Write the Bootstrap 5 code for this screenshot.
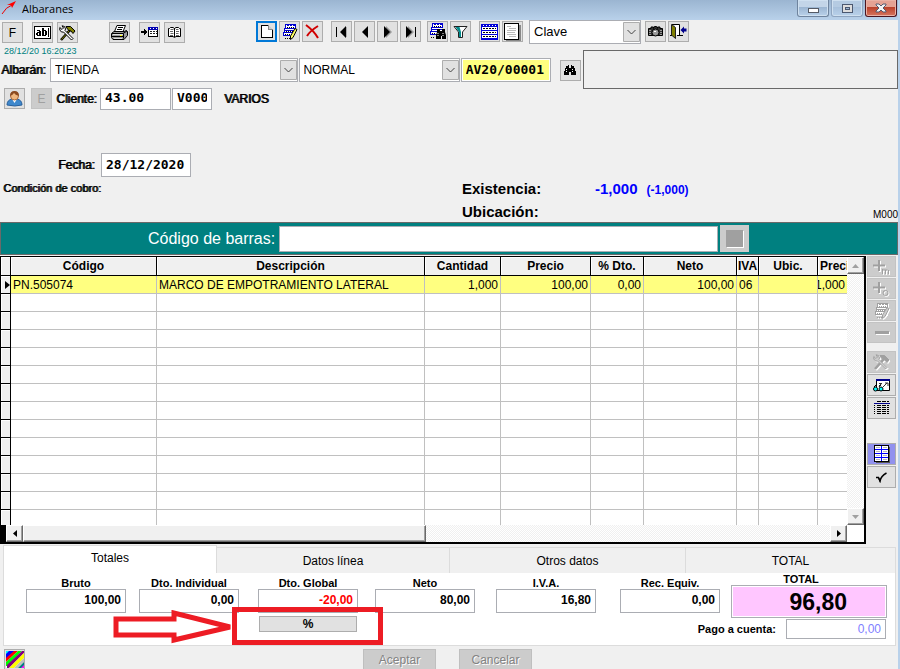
<!DOCTYPE html>
<html lang="es">
<head>
<meta charset="utf-8">
<meta name="viewport" content="width=device-width, initial-scale=1">
<title>Albaranes</title>
<link href="https://cdn.jsdelivr.net/npm/bootstrap@5.3.0/dist/css/bootstrap.min.css" rel="stylesheet">
<style>
body{font-family:"Liberation Sans",Arial,sans-serif;font-size:12px;line-height:14px;color:#000;background:#f0f0f0}
button,input,select{font-family:inherit;font-size:12px;line-height:14px;color:#000;border-radius:0}
svg{display:block;flex:none}
.frame{border-right:2px solid #b9d1ea;min-height:100vh}
.titlebar{height:20px;background:linear-gradient(#9bb5d1,#b9d1ea);font:11px/18px "Open Sans",sans-serif}
.winbtns{gap:2px;margin-right:1px}
.winbtn{width:32px;height:17px;border:1px solid #6f849e;border-top:0;border-radius:0 0 3px 3px;background:linear-gradient(#c3d5e8 45%,#9cb6d2 46%,#b9d1ea);box-shadow:inset 0 0 0 1px #cfe0f0}
.winbtn.dim{border-color:#8fa5c0;background:linear-gradient(#b5cbe2 45%,#a8c1dc 46%,#b9d1ea)}
.winbtn.exit{border-color:#4a1520;background:linear-gradient(#e5a294 45%,#bb412b 46%,#d6765f);box-shadow:inset 0 0 0 1px #eab1a5}
.tool{width:21px;height:21px;padding:0;border:1px solid #adadad;background:#e1e1e1;display:flex;align-items:center;justify-content:center;flex:none;color:#000}
.tool.current{border:2px solid #0078d7}
.tool:disabled,.side:disabled{background:#ccc;border-color:#c3c3c3;color:#a0a0a0}
.side:disabled svg{filter:drop-shadow(1px 1px 0 #fff)}
.tools{padding:1px 0 0 2px}
.tools .left-set{margin-top:1px;margin-right:71px}
.g1{gap:1px}.g2{gap:2px}.g4{gap:4px}.g9{gap:9px}.g31{gap:31px}
.ml8{margin-left:8px}.ml6{margin-left:6px}
.combo{position:relative;height:24px}
.combo select{appearance:none;width:100%;height:100%;border:1px solid #abadb3;background:#fff;padding:0 20px 0 4px}
.combo svg{position:absolute;right:1px;top:2px;pointer-events:none}
.combo.key{width:112px;margin-top:-1px}
.combo.key select{font-size:13px}
.combo.shop{flex:249 1 0}.combo.kind{flex:162 1 0}
.txt{height:24px;border:1px solid #abadb3;background:#fff;padding:0 4px;border-radius:0;min-width:0}
.mono{font:bold 13px/16px "DejaVu Sans Mono",monospace;padding-bottom:2px}
.thick{text-shadow:1px 0 0 #000}
.stamp{font-size:9px;line-height:14px;color:#008080;padding-left:4px}
.upper-left{flex:584 1 0;min-width:0}
.shop-label{width:49px;padding-left:1px}
.find{margin:0 2px 0 8px}
.notice{flex:314 1 0;height:39px;margin:6px 0 0;border:1px solid #696969}
.docno{width:90px;background:#ffff80;box-shadow:inset 0 0 0 1px #fff}
.client{margin-top:-2px;padding:0 0 0 4px;height:23px}
.client .txt{height:22px}
.client label{margin:0 2px 0 4px;width:42px}
.client .acct{width:71px;margin-right:1px}
.client .sub{width:40px}
.dates{margin-top:43px;padding-left:58px}
.dates label{width:43px}
.dates .txt{width:90px}
.cond{font-size:11px;width:462px;padding:4px 0 0 3px}
.stock{font-size:15px;line-height:23px;font-weight:bold;margin:0 0 -1px}
.stock dt{width:133px}
.stock dd{margin:0}
.stock .pair{height:23px}
.blue{color:#0000ff}
.small-blue{font-size:12px;line-height:14px;margin-left:9px}
.station{font-size:10px;line-height:14px}
.barcode{height:33px;background:#008080;border:1px solid #696969;padding-left:147px;color:#fff;font-size:16px;gap:4px}
.barcode .txt{flex:438 1 0;height:26px}
.barcode .pad{flex:147 1 0}
.scan{width:29px;height:27px;border:0;background:#ccc;display:flex;align-items:center;justify-content:center;padding:0;margin-left:-2px}
.swatch{width:17px;height:17px;background:#a0a0a0;box-shadow:1px 1px 0 #fff}
.work{padding-top:1px}
.gridbox{border:1px solid #000;border-width:1px 2px 2px 1px;background:#fff;min-width:0;flex:1 1 0}
.viewport{height:268px;overflow:hidden;flex:1 1 0;min-width:0}
.lines{table-layout:fixed;width:100%;border-collapse:separate;border-spacing:0}
.lines th,.lines td{height:18px;padding:0 2px 0 2px;border-right:1px solid #c0c0c0;border-bottom:1px solid #c0c0c0;white-space:nowrap;overflow:hidden;line-height:16px}
.lines th{height:19px;background:#f0f0f0;border-color:#000;text-align:center;box-shadow:inset 1px 1px 0 #fff}
.lines tbody th{height:18px;padding:0}
.lines tr>:last-child{border-right:0}
.lines .picked td{background:#ffff80}
.lines td.num{text-align:right}
.lines td.clipped{direction:rtl}
.vbar{width:17px;height:268px}
.hbar{height:17px}
.track{background:repeating-conic-gradient(#fff 0 25%,#f0f0f0 0 50%) 0 0/2px 2px}
.arrowbtn{width:17px;height:17px;border:1px solid;border-color:#fff #696969 #696969 #fff;box-shadow:inset -1px -1px 0 #a0a0a0;background:#f0f0f0;padding:0;display:flex;align-items:center;justify-content:center;flex:none}
.thumb{flex:404 1 0;border:1px solid;border-color:#fff #696969 #696969 #fff;box-shadow:inset -1px -1px 0 #a0a0a0;background:#f0f0f0}
.hbar .track{flex:407 1 0}
.stopper{width:5px;background:#000}
.corner{width:17px}
.sidebar{width:32px;padding:0 2px 0 1px;gap:1px}
.side{width:29px;height:22px;padding:0;border:1px solid #adadad;background:#e1e1e1;display:flex;align-items:center;justify-content:center;color:#000}
.side.low{height:21px}
.side.on{background:#9191ee}
.mt7{margin-top:7px}.mt23{margin-top:23px}
.grey-set{--b:#a0a0a0;--y:#ccc;--w:#ccc;--h:#a0a0a0}
.tabs{display:grid;grid-template-columns:214fr 233fr 236fr 210fr;margin:0 2px 0 3px;height:29px}
.tabs button{border:1px solid #dcdcdc;border-width:1px 1px 0 0;background:#f0f0f0;margin-top:3px;padding:0}
.tabs button.open{background:#fff;border-left-width:1px;margin-top:1px;padding-bottom:4px}
.pane{margin:0 2px 0 3px;background:#fff;border:1px solid #dcdcdc;border-top:0;height:73px;padding:0 8px 0 22px;display:grid;grid-template-columns:113fr 119fr 117fr 121fr 124fr 111fr 156fr;font-weight:bold}
.sum{width:100px;position:relative;padding-top:4px;text-align:center}
.sum label{display:block;font-size:11px;line-height:12px}
.sum .txt,.pay .txt{width:100px;text-align:right;font-weight:bold;padding-bottom:2px}
.sum .neg{color:#f00}
.pct{width:98px;height:16px;border:1px solid #adadad;background:#e1e1e1;padding:0;font-weight:bold;display:block;margin:3px auto 0;line-height:13px}
.grand{text-align:center;min-width:0}
.grand>label{display:block;font-size:11px;line-height:12px;padding-right:16px}
.grand .big{display:block;width:100%;height:33px;border:1px solid #abadb3;box-shadow:inset 0 0 0 1px #fff;background:#ffc6ff;font-size:23px;line-height:28px;font-weight:bold;text-align:right;padding:2px 39px 0 0}
.pay{gap:10px;font-size:11px;white-space:nowrap;margin-top:1px;padding-right:1px}
.pay>*{flex:none}
.pay .txt{height:20px;color:#8080ff;padding-bottom:0;font-weight:normal}
.mark-box{position:absolute;left:-26px;top:34px;width:151px;height:38px;border:5px solid #ed1c24;pointer-events:none;z-index:1}
.mark-arrow{position:absolute;left:-145px;top:37px;pointer-events:none}
.footer-row{padding:3px 0 0 4px}
.act{width:73px;height:21px;border:1px solid #bfbfbf;background:#ccc;padding:0}
.act:disabled{color:#838383;text-shadow:1px 1px 0 #fff}
.footer-row .logo{margin-right:338px}
.footer-row .act{margin-right:23px}
</style>
<script src="https://cdn.jsdelivr.net/npm/bootstrap@5.3.0/dist/js/bootstrap.bundle.min.js"></script>
</head>
<body>
<svg class="d-none" aria-hidden="true">
  <symbol id="i-chev" viewBox="0 0 17 20"><path d="M.5 .5h16v19H.5z" fill="#e1e1e1" stroke="#adadad"/><path d="M4.500 8l4 4 4-4" fill="none" stroke="#444"/></symbol>
  <symbol id="i-tools" viewBox="0 0 17 16"><path d="M2 15L11 5" stroke="currentColor" stroke-width="2.600"/><path d="M2.500 14.500L10 6" stroke="var(--h,#808000)"/><path d="M7 1.500h4.500L16 6l-2 2.500-2-2.500-2-.5L8.500 4z" fill="var(--h,#808000)" stroke="currentColor"/><path d="M.8 2.500L3 4.500 4.500 3 3 .8 5.500 1.500 6.500 4 6 5.500 14 13.500 12.500 15 4.500 7 2.500 7 .8 5z" fill="var(--w,#fff)" stroke="currentColor"/></symbol>
  <symbol id="i-form" viewBox="0 0 16 16"><path d="M3 0h11v4h-1v8H1V8h1V4h1z" fill="#fff"/><path d="M3 0h11v2H3zM2 4h12v1H2zM3 2h1v2H3zM13 2h1v3h-1zM2 5h1v3H2zM1 8h11v1H1zM1 9h1v3H1zM1 11h7v1H1zM2 6h11v1H2z" fill="var(--b,#0000d0)" shape-rendering="crispEdges"/><path d="M4 1.500h9" stroke="#fff" stroke-dasharray="1 2" shape-rendering="crispEdges"/><path d="M5 3.500h8M4 7.500h7M3 10.500h5M3 14.500h6" stroke="currentColor" stroke-dasharray="1 1" shape-rendering="crispEdges"/><path d="M13 4.500l2 1-4 8-2.500 2V12z" fill="var(--y,#ffff60)" stroke="currentColor"/></symbol>
  <symbol id="i-bino" viewBox="0 0 12 11"><path d="M2 1h2V0h1v3h2V0h1v1h2v2h1v3h1v4H7V7H5v3H0V6h1V3h1z" fill="currentColor"/><path d="M2.500 4v4M8.500 4v4" stroke="#fff" stroke-dasharray="1 1"/></symbol>
  <symbol id="i-table" viewBox="0 0 17 16"><g shape-rendering="crispEdges"><path d="M0 0h17v16H0z" fill="#fff"/><path d="M0 0h17v3H0zM0 3h1v13H0zM16 3h1v13h-1zM0 6h17v1H0zM0 10h17v1H0zM0 14h17v2H0z" fill="#0000d8"/><path d="M2 4.500h13M2 8.500h13M2 12.500h13" stroke="#000" stroke-dasharray="2 1"/><path d="M2 1.500h13" stroke="#fff" stroke-dasharray="1 2"/></g></symbol>
</svg>

<div class="frame">
  <header class="titlebar d-flex">
    <svg width="18" height="16" viewBox="0 0 18 16" class="me-1"><path d="M2 14Q6 7 12 5" fill="none" stroke="#e00"/><path d="M7 5l9-4-4 7-1-3z" fill="#f00"/></svg>
    <span class="flex-grow-1">Albaranes</span>
    <div class="winbtns d-flex">
      <button class="winbtn p-0 d-flex justify-content-center align-items-center" aria-label="Minimizar"><svg width="11" height="12" shape-rendering="crispEdges"><path d="M.5 6.500h10v4H.5z" fill="#fff" stroke="#555b66"/></svg></button>
      <button class="winbtn dim p-0 d-flex justify-content-center align-items-center" aria-label="Restaurar"><svg width="11" height="9" shape-rendering="crispEdges"><path d="M.5 .5h10v8H.5z" fill="#ddd" stroke="#4b5870"/><path d="M3.500 3.500h4v2h-4z" fill="#9bb5d1" stroke="#4b5870"/></svg></button>
      <button class="winbtn exit p-0 d-flex justify-content-center align-items-center" aria-label="Cerrar"><svg width="12" height="10"><path d="M1 1h3l2 2 2-2h3v1L8 5l3 3v1H8L6 7 4 9H1V8l3-3-3-3z" fill="#f4f4f4" stroke="#555b70"/></svg></button>
    </div>
  </header>

  <nav class="tools d-flex align-items-start" aria-label="Herramientas">
    <div class="left-set d-flex g31">
      <div class="d-flex g9">
        <button class="tool">F</button>
        <div class="d-flex g4">
          <button class="tool" aria-label="Texto"><svg width="17" height="13" viewBox="0 0 17 13" shape-rendering="crispEdges"><path d="M.5 .5h16v12H.5z" fill="#fff" stroke="#000"/><path d="M3 4h3v1h1v5H3V9H2V7h1V6h2V5H3zM4 7v2h1V7zM8 2h2v2h2v1h1v4h-1v1H8zm2 3v4h1V5zM14 2h1v9h-1z" fill="#000" fill-rule="evenodd"/></svg></button>
          <button class="tool" aria-label="Opciones"><svg width="17" height="16"><use href="#i-tools"/></svg></button>
        </div>
      </div>
      <div class="d-flex g9">
        <button class="tool" aria-label="Imprimir"><svg width="17" height="15" viewBox="0 0 17 15"><path d="M6 .5h8.500L12 6.500H3.500z" fill="#fff" stroke="#000"/><path d="M7 2.500h5M6 4.500h5" stroke="#000"/><path d="M.5 8.500L3 6.500h10l2.500-1 1 1v4l-3.500 4H2l-1.500-2z" fill="#999" stroke="#000"/><path d="M1 8.500h11l4-2.500M12.500 8.500v5M1 11.500h11" fill="none" stroke="#000"/><path d="M2 9.500h10M3 13.500h8" stroke="#ddd"/><path d="M9 10.500h2" stroke="#ff0"/></svg></button>
        <div class="d-flex g4">
          <button class="tool" aria-label="Insertar"><svg width="17" height="11" viewBox="0 0 17 11" shape-rendering="crispEdges"><path d="M0 4h3V2h1v1h1v1h1v2H5v1H4v1H3V6H0z"/><path d="M7.500 .5h9v9h-9z" fill="#fff" stroke="#000"/><path d="M7 0h10v3H7z" fill="#0000b0"/><path d="M9 1.500h7" stroke="#fff" stroke-dasharray="1 2"/><path d="M9 4.500h7M9 6.500h7" stroke="#222" stroke-dasharray="2 1"/></svg></button>
          <button class="tool" aria-label="Libro"><svg width="15" height="13" viewBox="0 0 15 13"><path d="M1.500 2.500h1l1-1H6l1.500 1 1.500-1h2.500l1 1h1v8H9l-1.500 1-1.500-1H1.500z" fill="#fff" stroke="#000"/><path d="M7.500 2v9" stroke="#000"/><path d="M3.500 3.500h3M3 5.500h3M3.500 7.500h3M3 9.500h3M9 3.500h2.500M9 5.500h3M9 7.500h2.500M9 9.500h3" stroke="#666"/></svg></button>
        </div>
      </div>
    </div>
    <div class="d-flex g2">
      <button class="tool current" aria-label="Nuevo"><svg width="12" height="15" viewBox="0 0 12 15" shape-rendering="crispEdges"><path d="M.5 1.500h7l4 4v8H.5z" fill="#fff" stroke="#000"/><path d="M7.500 1v4.500h4" fill="#ccc" stroke="#888"/></svg></button>
      <button class="tool" aria-label="Modificar"><svg width="16" height="16"><use href="#i-form"/></svg></button>
      <button class="tool" aria-label="Eliminar"><svg width="15" height="15" viewBox="0 0 15 15"><path d="M1 1q8 6 12 13M13 2Q5 7 2 12" fill="none" stroke="#d00000" stroke-width="2"/></svg></button>
    </div>
    <div class="d-flex g2 ml8">
      <button class="tool" aria-label="Primero"><svg width="13" height="12"><path d="M10 1v10l2 0v-10z" fill="#aaa"/><path d="M1 1h1v10H1zM11 0v12L5 6z"/></svg></button>
      <button class="tool" aria-label="Anterior"><svg width="8" height="12"><path d="M7 0v12L1 6z"/></svg></button>
      <button class="tool" aria-label="Siguiente"><svg width="9" height="12"><path d="M3 0v12l6-6z" fill="#999"/><path d="M1 0v12l6-6z"/></svg></button>
      <button class="tool" aria-label="Último"><svg width="13" height="12"><path d="M4 0v12l6-6z" fill="#999"/><path d="M11 1h1v10h-1zM2 0v12l6-6z"/></svg></button>
    </div>
    <div class="d-flex g2 ml6">
      <button class="tool" aria-label="Buscar"><svg width="17" height="17" viewBox="0 0 17 17"><g shape-rendering="crispEdges"><path d="M3 0h11v4h-1v8H1V8h1V4h1z" fill="#fff"/><path d="M3 0h11v2H3zM2 4h12v1H2zM3 2h1v2H3zM13 2h1v3h-1zM2 5h1v3H2zM1 8h11v1H1zM1 9h1v3H1zM1 11h7v1H1zM2 6h11v1H2z" fill="#0000d0"/><path d="M4 1.500h9" stroke="#fff" stroke-dasharray="1 2"/><path d="M5 3.500h8M3 10.500h4M2 14.500h4" stroke="#000" stroke-dasharray="1 1"/></g><path d="M8 6h3v2h2V6h3v3l1 3v4h-4v-3h-1v3H7v-4l1-3z"/><path d="M9 10v4M14 10v4" stroke="#fff" stroke-dasharray="1 1"/></svg></button>
      <button class="tool" aria-label="Filtrar"><svg width="15" height="12" viewBox="0 0 15 12"><path d="M1 .5h13L9.500 6v5.500h-4V6z" fill="#fff" stroke="#222"/><path d="M2.500 1h4L8 6v5H6V6z" fill="#008b8b"/></svg></button>
    </div>
    <div class="d-flex g2 ml8">
      <button class="tool" aria-label="Tabla"><svg width="17" height="16"><use href="#i-table"/></svg></button>
      <button class="tool" aria-label="Ficha"><svg width="17" height="18" viewBox="0 0 17 18" shape-rendering="crispEdges"><path d="M2 2h15v16H2z" fill="#888"/><path d="M.5 .5h14v16H.5z" fill="#fff" stroke="#000"/><path d="M3 3.500h4M5 5.500h7M3 7.500h9M3 9.500h8M3 11.500h9M5 13.500h7" stroke="#bbb"/></svg></button>
    </div>
    <div class="combo key ml6"><select aria-label="Ordenar por"><option>Clave</option></select><svg width="17" height="20"><use href="#i-chev"/></svg></div>
    <div class="d-flex g2 ms-1">
      <button class="tool" aria-label="Cámara"><svg width="15" height="12" viewBox="0 0 15 12"><path d="M.5 2.500H3V1h2.500v1.500l1-2h2l1 2V1H12v1.500h2.500v7H.5z" fill="#333" stroke="#000"/><circle cx="7.500" cy="6.500" r="3.500" fill="#999" stroke="#000"/><path d="M2 4v5M13 4v5" stroke="#fff" stroke-dasharray="1 1"/><path d="M6 5h2v1H6z" fill="#fff"/></svg></button>
      <button class="tool" aria-label="Salir"><svg width="17" height="15" viewBox="0 0 17 15"><path d="M2 .5h7.500v11M0 11.500h2M7 11.500h6" fill="none" stroke="#000"/><path d="M5 1h4v10H6z" fill="#fff"/><path d="M1.500 .5l4 3v11l-4-3.500z" fill="#808000" stroke="#222"/><path d="M10.500 6l3.500-3.500v2h2.500v3H14v2z" fill="#00008b"/></svg></button>
    </div>
  </nav>

  <main>
    <div class="d-flex align-items-start">
      <div class="upper-left">
        <div class="stamp">28/12/20 16:20:23</div>
        <div class="d-flex align-items-center g1">
          <label class="shop-label thick" for="shop">Albarán:</label>
          <div class="combo shop"><select id="shop"><option>TIENDA</option></select><svg width="17" height="20"><use href="#i-chev"/></svg></div>
          <div class="combo kind"><select aria-label="Tipo"><option>NORMAL</option></select><svg width="17" height="20"><use href="#i-chev"/></svg></div>
          <input class="txt mono docno flex-shrink-0" aria-label="Número" value="AV20/00001">
          <button class="tool find" aria-label="Buscar albarán"><svg width="12" height="11"><use href="#i-bino"/></svg></button>
        </div>
      </div>
      <div class="notice"></div>
    </div>

    <div class="client d-flex align-items-center">
      <button class="tool" aria-label="Cliente"><svg width="17" height="17" viewBox="0 0 17 17"><path d="M1 15q0-5 5-6h5q5 1 5 6-7 2-15 0z" fill="#3f88cc" stroke="#28609c"/><path d="M6 9l2.500 4L11 9z" fill="#fff"/><circle cx="8.500" cy="6" r="4" fill="#efb77f" stroke="#a8683c"/><path d="M4 6Q4 1 8.500 1T13 6Q9 5 8 3 7 5 4 6z" fill="#8b4a20"/></svg></button>
      <button class="tool ml6" disabled>E</button>
      <label class="thick" for="acct">Cliente:</label>
      <input id="acct" class="txt mono acct" value="43.00">
      <input class="txt mono sub" aria-label="Subcuenta" value="V000">
      <span class="thick ps-2 ms-1">VARIOS</span>
    </div>

    <div class="dates d-flex align-items-center">
      <label class="thick" for="day">Fecha:</label>
      <input id="day" class="txt mono" value="28/12/2020">
    </div>

    <div class="d-flex">
      <div class="cond thick">Condición de cobro:</div>
      <dl class="stock flex-grow-1">
        <div class="pair d-flex"><dt>Existencia:</dt><dd class="blue">-1,000<span class="small-blue">(-1,000)</span></dd></div>
        <div class="pair d-flex"><dt>Ubicación:</dt></div>
      </dl>
      <div class="station align-self-end">M000</div>
    </div>

    <div class="barcode d-flex align-items-center">
      <label for="bar">Código de barras:</label>
      <input id="bar" class="txt">
      <button class="scan" aria-label="Leer código" disabled><span class="swatch"></span></button>
      <span class="pad"></span>
    </div>

    <div class="work d-flex">
      <div class="gridbox">
        <div class="d-flex">
          <div class="viewport">
            <table class="lines" id="lines">
              <colgroup><col style="width:10px"><col style="width:146px"><col><col style="width:76px"><col style="width:90px"><col style="width:53px"><col style="width:93px"><col style="width:22px"><col style="width:59px"><col style="width:29px"></colgroup>
              <thead><tr><th></th><th>Código</th><th>Descripción</th><th>Cantidad</th><th>Precio</th><th>% Dto.</th><th>Neto</th><th class="px-0">IVA</th><th>Ubic.</th><th class="pe-0 text-start">Precio</th></tr></thead>
              <tbody><tr class="picked"><th><svg class="ms-1" width="5" height="8"><path d="M0 0l5 4-5 4z"/></svg></th><td>PN.505074</td><td>MARCO DE EMPOTRAMIENTO LATERAL</td><td class="num">1,000</td><td class="num">100,00</td><td class="num">0,00</td><td class="num">100,00</td><td>06</td><td></td><td class="clipped">1,000</td></tr></tbody>
            </table>
          </div>
          <div class="vbar d-flex flex-column">
            <button class="arrowbtn" aria-label="Subir"><svg width="7" height="4"><path d="M0 4l3.500-4L7 4z" fill="#a0a0a0"/></svg></button>
            <div class="track flex-grow-1"></div>
            <button class="arrowbtn" aria-label="Bajar"><svg width="7" height="4"><path d="M0 0h7L3.500 4z" fill="#a0a0a0"/></svg></button>
          </div>
        </div>
        <div class="hbar d-flex">
          <div class="stopper"></div>
          <button class="arrowbtn" aria-label="Izquierda"><svg width="4" height="7"><path d="M4 0v7L0 3.500z"/></svg></button>
          <div class="thumb"></div><div class="track"></div>
          <button class="arrowbtn" aria-label="Derecha"><svg width="4" height="7"><path d="M0 0v7l4-3.500z"/></svg></button>
          <div class="corner"></div>
        </div>
      </div>
      <div class="sidebar d-flex flex-column">
        <button class="side low" disabled aria-label="Añadir M"><svg width="17" height="16" viewBox="0 0 17 16" fill="none" stroke="currentColor"><path d="M6 1v11M0 6.500h12" stroke-width="2"/><path d="M9.500 15v-5M9.500 11h5M12.500 11v4M15.500 11v4"/></svg></button>
        <button class="side low" disabled aria-label="Añadir O"><svg width="17" height="16" viewBox="0 0 17 16" fill="none" stroke="currentColor"><path d="M6 1v11M0 6.500h12" stroke-width="2"/><circle cx="12.500" cy="12" r="2.500"/></svg></button>
        <button class="side low grey-set" disabled aria-label="Modificar línea"><svg width="16" height="16"><use href="#i-form"/></svg></button>
        <button class="side low" disabled aria-label="Quitar línea"><svg width="14" height="3"><path d="M0 0h14v3H0z" fill="currentColor"/></svg></button>
        <button class="side mt7 grey-set" disabled aria-label="Opciones de línea"><svg width="17" height="16"><use href="#i-tools"/></svg></button>
        <button class="side" aria-label="Consultar"><svg width="17" height="13" viewBox="0 0 17 13"><path d="M3.500 1h13v10.500h-13z" fill="#fff" stroke="#000"/><path d="M3 1h14" stroke="#00008b" stroke-width="2"/><path d="M6 4.500h3M10 8l4-4M12 4h3v3M6 6.500h2" stroke="#333" fill="none"/><circle cx="2.500" cy="10" r="2" fill="#0ff" stroke="#000"/><circle cx="8" cy="10" r="2" fill="#0ff" stroke="#000"/><path d="M1 8l3-3M6 8l2-3" stroke="#000"/></svg></button>
        <button class="side" aria-label="Listado"><svg width="16" height="14" viewBox="0 0 16 14" shape-rendering="crispEdges"><path d="M3 .5h12" stroke="#000" stroke-dasharray="4 1"/><path d="M0 2.500h16" stroke="#00008b"/><path d="M.5 4v10" stroke="#000" stroke-dasharray="1 1"/><path d="M3 4.500h12M3 6.500h12M3 8.500h12M3 10.500h12M3 12.500h12" stroke="#000" stroke-dasharray="4 1"/></svg></button>
        <button class="side on mt23" aria-label="Vista de tabla"><svg width="16" height="18" viewBox="0 0 16 18" shape-rendering="crispEdges"><path d="M2 2h14v16H2z" fill="#555"/><path d="M.5 .5h14v16H.5z" fill="#fff" stroke="#000"/><path d="M1 4.500h13M1 8.500h13M1 12.500h13M7.500 1v15" stroke="#00f"/><path d="M2 2.500h4M9 2.500h4M2 6.500h4M9 6.500h4M2 10.500h4M9 10.500h4M2 14.500h4M9 14.500h4" stroke="#bbb"/></svg></button>
        <button class="side" aria-label="Validar"><svg width="11" height="11" viewBox="0 0 11 11"><path d="M0 5.500h2.500l1.500 3.500Q5 4 10.500 1" fill="none" stroke="#000" stroke-width="1.500"/><path d="M2 6l2 4.500L5 7z"/></svg></button>
      </div>
    </div>

    <div class="tabs" role="tablist">
      <button class="open" role="tab" aria-selected="true">Totales</button>
      <button role="tab">Datos línea</button>
      <button role="tab">Otros datos</button>
      <button role="tab">TOTAL</button>
    </div>
    <section class="pane">
      <div class="sum"><label for="s1">Bruto</label><input id="s1" class="txt" value="100,00"></div>
      <div class="sum"><label for="s2">Dto. Individual</label><input id="s2" class="txt" value="0,00"></div>
      <div class="sum"><label for="s3">Dto. Global</label><input id="s3" class="txt neg" value="-20,00">
        <button class="pct">%</button>
        <svg class="mark-arrow" width="120" height="34" viewBox="0 0 120 34"><path d="M3 9h58V3l56 14-56 13v-5H3z" fill="none" stroke="#ed1c24" stroke-width="5"/></svg>
        <div class="mark-box"></div>
      </div>
      <div class="sum"><label for="s4">Neto</label><input id="s4" class="txt" value="80,00"></div>
      <div class="sum"><label for="s5">I.V.A.</label><input id="s5" class="txt" value="16,80"></div>
      <div class="sum"><label for="s6">Rec. Equiv.</label><input id="s6" class="txt" value="0,00"></div>
      <div class="grand"><label for="tot">TOTAL</label><input id="tot" class="big" value="96,80">
        <div class="pay d-flex align-items-center justify-content-end"><label for="paid">Pago a cuenta:</label><input id="paid" class="txt" value="0,00"></div>
      </div>
    </section>
    <footer class="footer-row d-flex align-items-start">
      <button class="tool logo" aria-label="Colores"><svg width="18" height="17" viewBox="0 0 18 17"><path d="M0 0h18v17H0z" fill="#fff"/><path d="M0 0h9L0 8z" fill="#00f"/><path d="M0 0h3L0 3z" fill="#0ff"/><path d="M8 0h4L0 11V7z" fill="#f00"/><path d="M12 0h4L1 15H0v-4z" fill="#0f0"/><path d="M16 0h2v2L3 17H1v-3z" fill="#800080"/><path d="M18 2v5L8 17H3z" fill="#ff0"/><path d="M18 7v4l-6 6H8z" fill="#c0c0c0"/><path d="M18 11v6h-6z" fill="#008080"/><path d="M18 14v3h-3z" fill="#f0f"/></svg></button>
      <button class="act" disabled>Aceptar</button>
      <button class="act" disabled>Cancelar</button>
    </footer>
  </main>
</div>
<script>
  // Blank rows fill the rest of the grid below the single order line
  const body = document.querySelector('#lines tbody');
  for (let i = 0; i < 13; i++) {
    const row = body.insertRow();
    row.appendChild(document.createElement('th'));
    for (let c = 0; c < 9; c++) row.insertCell();
  }
</script>
</body>
</html>
